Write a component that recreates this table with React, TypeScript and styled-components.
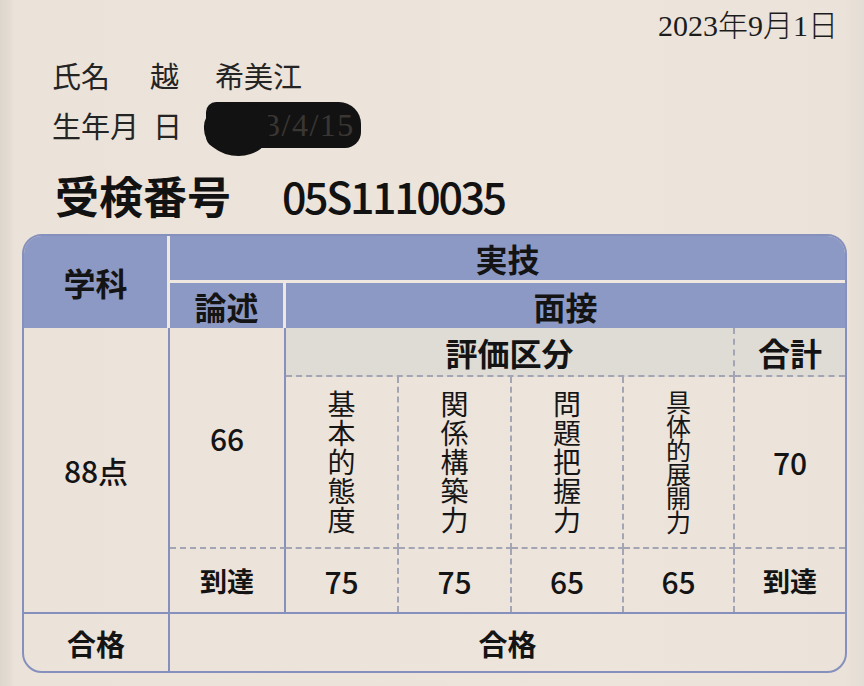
import React from "react";
import styled, { createGlobalStyle } from "styled-components";

const GlobalStyle = createGlobalStyle`
  html, body { margin: 0; padding: 0; }
  body {
    width: 864px;
    height: 686px;
    overflow: hidden;
    background: linear-gradient(
      to right,
      #dcd6cd 0px,
      #e3dcd3 9px,
      #ebe2d9 14px,
      #ede4db 600px,
      #ebe2d9 846px,
      #e3ddd5 864px
    );
    font-family: "Noto Sans CJK JP", "Noto Sans", sans-serif;
    color: #161616;
  }
`;

const Page = styled.div`
  width: 864px;
  height: 686px;
  box-sizing: border-box;
  padding: 10px 17px 0 22px;
  display: flex;
  flex-direction: column;
`;

const DateLine = styled.div`
  align-self: flex-end;
  margin-right: 9px;
  height: 32px;
  line-height: 32px;
  font-family: "Liberation Serif", "Noto Sans CJK JP", serif;
  font-size: 30px;
  font-weight: 300;
  color: #1c1c1c;
`;

const InfoRow = styled.div<{ $top?: number }>`
  display: flex;
  align-items: center;
  height: 50px;
  margin-top: ${(p) => p.$top ?? 0}px;
  padding-left: 30px;
  font-size: 29px;
  font-weight: 400;
  color: #242424;
  white-space: nowrap;
`;

const Spaced = styled.span<{ $gap: number }>`
  margin-left: ${(p) => p.$gap}px;
`;

const Redaction = styled.span`
  position: relative;
  display: inline-flex;
  align-items: center;
  height: 46px;
  margin-left: 24px;
  padding: 0 6px 0 58px;
  background: #131212;
  border-radius: 10px 22px 16px 12px;
  font-family: "Liberation Serif", serif;
  font-size: 32px;
  letter-spacing: 1.5px;
  color: #3a3633;

  &::before {
    content: "";
    position: absolute;
    left: -2px;
    top: 2px;
    width: 66px;
    height: 52px;
    border-radius: 45% 40% 50% 55%;
    background: #131212;
  }
`;

const ExamRow = styled.div`
  display: flex;
  align-items: center;
  height: 50px;
  margin-top: 20px;
  padding-left: 33px;
  white-space: nowrap;
`;

const ExamLabel = styled.span`
  font-size: 44px;
  font-weight: 700;
  color: #121212;
`;

const ExamNumber = styled.span`
  margin-left: 51px;
  font-size: 43px;
  font-weight: 500;
  letter-spacing: -2.4px;
  color: #121212;
`;

const Table = styled.div`
  margin-top: 14px;
  width: 825px;
  box-sizing: border-box;
  border: 2px solid #8590bd;
  border-radius: 20px;
  overflow: hidden;
  display: grid;
  grid-template-columns: 146px 116px 113px 113px 112px 111px 110px;
  grid-template-rows: 47px 45px 49px 172px 63px 59px;
`;

type Line = "white" | "solid" | "dashed" | undefined;

const lineCss = (l: Line) =>
  l === "white"
    ? "3px solid #eee8e1"
    : l === "solid"
    ? "2px solid #8590bd"
    : l === "dashed"
    ? "2px dashed #a3a5b4"
    : "none";

const Cell = styled.div<{ $col: string; $row: string; $r?: Line; $b?: Line; $t?: Line }>`
  grid-column: ${(p) => p.$col};
  grid-row: ${(p) => p.$row};
  border-right: ${(p) => lineCss(p.$r)};
  border-bottom: ${(p) => lineCss(p.$b)};
  border-top: ${(p) => lineCss(p.$t)};
  box-sizing: border-box;
  min-width: 0;
  display: flex;
  align-items: center;
  justify-content: center;
  color: #141414;
  white-space: nowrap;
`;

const HeadCell = styled(Cell)`
  background: #8c99c5;
  font-size: 32px;
  font-weight: 700;
`;

const ShadeCell = styled(Cell)`
  background: #dfdbd5;
  font-size: 32px;
  font-weight: 700;
`;

const ValueCell = styled(Cell)`
  font-size: 30px;
  font-weight: 500;
`;

const LabelCell = styled(Cell)<{ $size?: number }>`
  font-size: ${(p) => p.$size ?? 27}px;
  font-weight: 700;
`;

const VText = styled.span<{ $tight?: boolean }>`
  writing-mode: vertical-rl;
  text-orientation: upright;
  font-size: ${(p) => (p.$tight ? 25 : 28)}px;
  line-height: 30px;
  font-weight: 400;
  letter-spacing: ${(p) => (p.$tight ? -1 : 1)}px;
  color: #161616;
`;

const criteria = ["基本的態度", "関係構築力", "問題把握力", "具体的展開力"];
const scores = ["75", "75", "65", "65"];

export default function App() {
  return (
    <>
      <GlobalStyle />
      <Page>
        <DateLine>2023年9月1日</DateLine>
        <InfoRow $top={8}>
          氏名
          <Spaced $gap={40}>越</Spaced>
          <Spaced $gap={36}>希美江</Spaced>
        </InfoRow>
        <InfoRow>
          生年月<Spaced $gap={14}>日</Spaced>
          <Redaction>3/4/15</Redaction>
        </InfoRow>
        <ExamRow>
          <ExamLabel>受検番号</ExamLabel>
          <ExamNumber>05S1110035</ExamNumber>
        </ExamRow>

        <Table>
          <HeadCell $col="1" $row="1 / 3" $r="white">学科</HeadCell>
          <HeadCell $col="2 / 8" $row="1" $b="white">実技</HeadCell>
          <HeadCell $col="2" $row="2" $r="white">論述</HeadCell>
          <HeadCell $col="3 / 8" $row="2">面接</HeadCell>

          <ValueCell $col="1" $row="3 / 6" $r="solid">88点</ValueCell>
          <ValueCell $col="2" $row="3 / 5" $r="solid" $b="dashed">66</ValueCell>
          <ShadeCell $col="3 / 7" $row="3" $r="dashed" $b="dashed">評価区分</ShadeCell>
          <ShadeCell $col="7" $row="3" $b="dashed">合計</ShadeCell>

          {criteria.map((c, i) => (
            <Cell key={c} $col={`${i + 3}`} $row="4" $r="dashed" $b="dashed">
              <VText $tight={c.length > 5}>{c}</VText>
            </Cell>
          ))}
          <ValueCell $col="7" $row="4" $b="dashed">70</ValueCell>

          <LabelCell $col="2" $row="5" $r="solid">到達</LabelCell>
          {scores.map((s, i) => (
            <ValueCell key={i} $col={`${i + 3}`} $row="5" $r="dashed">
              {s}
            </ValueCell>
          ))}
          <LabelCell $col="7" $row="5">到達</LabelCell>

          <LabelCell $col="1" $row="6" $t="solid" $r="solid" $size={29}>合格</LabelCell>
          <LabelCell $col="2 / 8" $row="6" $t="solid" $size={29}>合格</LabelCell>
        </Table>
      </Page>
    </>
  );
}
